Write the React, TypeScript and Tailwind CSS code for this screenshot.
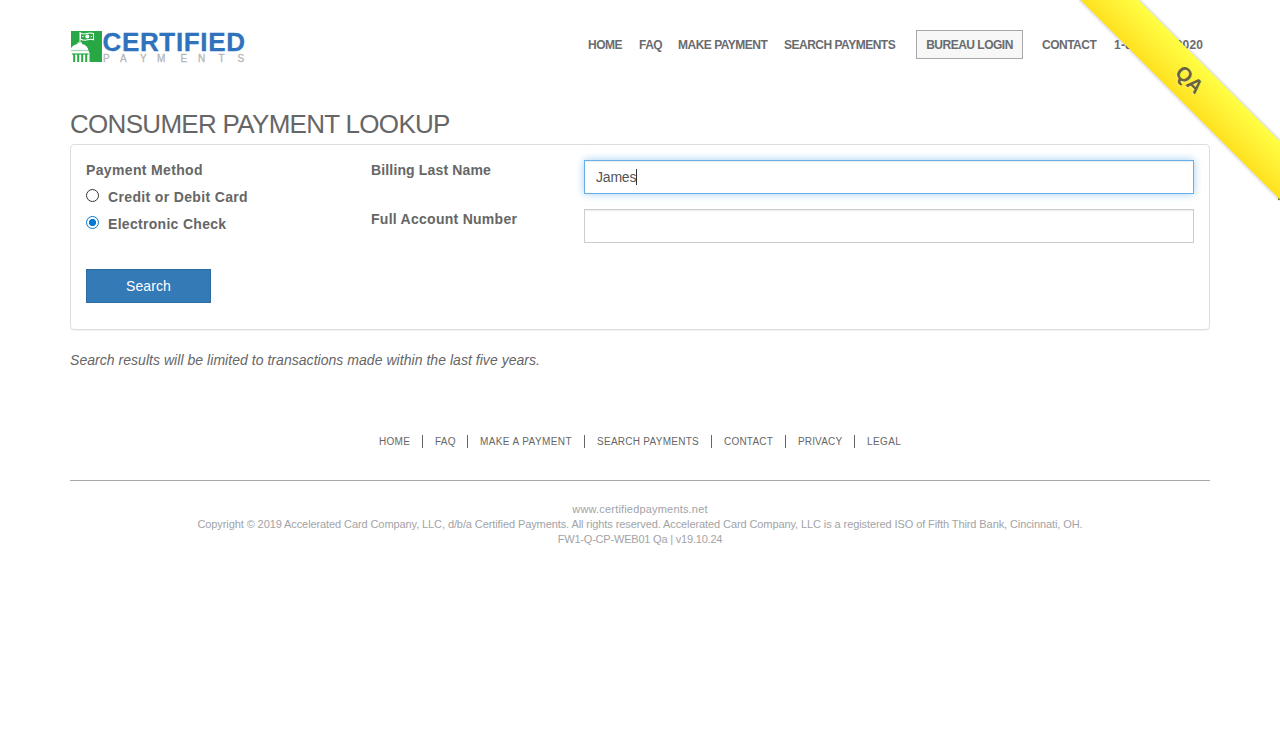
import React, { useState } from 'react';

function Logo() {
  return (
    <svg className="block overflow-visible" width="176" height="34" viewBox="0 0 176 34">
      <rect x="1" y="2" width="31" height="31" fill="#27a844" />
      <path d="M1 19 Q3.500 15.500 7.500 15 V13.500 H12 V15 Q17.500 16 18.500 21.500 L19.500 24 V33 H1 Z" fill="#fff" />
      <path d="M1 21.700 H18.500" stroke="#27a844" strokeWidth="0.500" />
      <path d="M2 25 H18.500" stroke="#27a844" strokeWidth="1.200" />
      <path d="M4.200 25 V33 M8.200 25 V33 M12.200 25 V33 M16.200 25 V33" stroke="#27a844" strokeWidth="2" />
      <path d="M10 3 V14" stroke="#fff" strokeWidth="1" />
      <path d="M10.500 4.200 Q13.500 5.500 17 4.500 T23.500 4.500 V10.700 Q20.500 9.700 17.500 10.800 T10.500 10.200 Z" fill="none" stroke="#fff" strokeWidth="1.100" />
      <circle cx="17.300" cy="7.600" r="2" fill="#fff" />
      <path d="M12.300 7.500 H13.600 M20.800 7.500 H22" stroke="#fff" strokeWidth="1.200" />
      <text x="32.500" y="21.500" textLength="142.500" lengthAdjust="spacing" fontSize="26" fontWeight="700" fill="#3073bd" stroke="#3073bd" strokeWidth="0.300">CERTIFIED</text>
      <text y="33" x="33 50 70 87 110.500 128 148.500 167.500" fontSize="10" fill="#b5b6b8" stroke="#b5b6b8" strokeWidth="0.300">PAYMENTS</text>
    </svg>
  );
}

function Ribbon() {
  return (
    <div className="pointer-events-none absolute top-0 right-0 h-[201px] w-[201px] overflow-hidden">
      <div className="absolute right-0 top-[196px] h-1 w-0.5 bg-[#7f9020]" />
      <div className="absolute left-[-54px] top-[60px] flex h-[41px] w-[330px] rotate-45 items-center justify-center bg-linear-to-t from-[#ffe11e] to-[#ffff44] pr-0.5 text-[20px] font-bold text-[#6a6340] shadow-[0_0_4px_rgba(0,0,0,0.3)] [text-shadow:0_1px_0_rgba(255,255,255,0.5)]">
        QA
      </div>
    </div>
  );
}

const footerLinks = [
  { label: 'HOME', style: 'w-[43px] tracking-[0.3px]' },
  { label: 'FAQ', style: 'w-[45px] border-l pl-3 tracking-[0.2px]' },
  { label: 'MAKE A PAYMENT', style: 'w-[117px] border-l pl-3 tracking-[0.4px]' },
  { label: 'SEARCH PAYMENTS', style: 'w-[127px] border-l pl-3 tracking-[0.27px]' },
  { label: 'CONTACT', style: 'w-[74px] border-l pl-3 tracking-[0.2px]' },
  { label: 'PRIVACY', style: 'w-[69px] border-l pl-3 tracking-[0.15px]' },
  { label: 'LEGAL', style: 'w-[47px] border-l pl-3 tracking-[0.4px]' },
];

export default function App() {
  const [method, setMethod] = useState('check');
  const radio =
    'mr-[9px] mt-[-3px] h-[13px] w-[13px] shrink-0 appearance-none rounded-full border border-[#333] checked:border-[#0078d7] checked:bg-[radial-gradient(circle,#0078d7_3.2px,transparent_4px)]';
  return (
    <div className="relative min-h-[750px] overflow-hidden bg-white font-['Liberation_Sans',Arial,sans-serif] text-sm text-[#666]">
      <div className="mx-auto w-[1140px]">
        <header className="flex h-[90px] items-start justify-between pt-[29px]">
          <Logo />
          <nav className="mt-px flex h-[29px] items-center pr-[7px] text-xs font-bold tracking-[-0.5px] whitespace-nowrap text-[#6a6b6e]">
            <a className="w-[51px]">HOME</a>
            <a className="w-[39px]">FAQ</a>
            <a className="w-[106px]">MAKE PAYMENT</a>
            <a className="w-[132px]">SEARCH PAYMENTS</a>
            <a className="mr-[19px] flex h-[29px] w-[107px] items-center justify-center border border-[#a7a8ac] bg-[#f7f7f7]">BUREAU LOGIN</a>
            <a className="w-[72px]">CONTACT</a>
            <a className="w-[89px] tracking-[0.28px]">1-888-604-2020</a>
          </nav>
        </header>

        <h1 className="pt-[19px] text-[26px] leading-[30px] tracking-[-0.7px]">CONSUMER PAYMENT LOOKUP</h1>

        <section className="mt-[5px] flex h-[186px] rounded-[4px] border border-[#ddd] px-[15px] pt-[15px] font-bold tracking-[0.35px] shadow-[0_1px_1px_rgba(0,0,0,0.05)]">
          <div className="w-[285px] leading-5">
            <div>Payment Method</div>
            <label className="mt-[7px] flex items-center">
              <input type="radio" name="m" className={radio} checked={method === 'card'} onChange={() => setMethod('card')} />
              Credit or Debit Card
            </label>
            <label className="mt-[7px] flex items-center tracking-[0.3px]">
              <input type="radio" name="m" className={radio} checked={method === 'check'} onChange={() => setMethod('check')} />
              Electronic Check
            </label>
            <button className="mt-[35px] block h-[34px] w-[125px] border border-[#2e6da4] bg-[#337ab7] text-sm font-normal tracking-[0.1px] text-white">Search</button>
          </div>
          <div className="flex-1">
            <div className="flex h-[49px]">
              <div className="w-[213px] leading-5 tracking-[0.15px]">Billing Last Name</div>
              <div className="flex h-[34px] flex-1 items-center border border-[#66afe9] pl-[11px] font-normal tracking-[-0.2px] text-[#555] shadow-[inset_0_1px_1px_rgba(0,0,0,0.075),0_0_8px_rgba(102,175,233,0.6)]">
                James
                <span className="h-4 w-px bg-[#333]" />
              </div>
            </div>
            <div className="flex">
              <div className="w-[213px] leading-5 tracking-[0.27px]">Full Account Number</div>
              <div className="h-[34px] flex-1 border border-[#ccc] shadow-[inset_0_1px_1px_rgba(0,0,0,0.075)]" />
            </div>
          </div>
        </section>

        <p className="mt-5 leading-5 tracking-[0.04px] italic">Search results will be limited to transactions made within the last five years.</p>

        <footer>
          <nav className="mt-[65px] flex justify-center text-[10px] leading-[13px] whitespace-nowrap">
            {footerLinks.map(({ label, style }) => (
              <a key={label} className={`border-[#666] ${style}`}>{label}</a>
            ))}
          </nav>
          <div className="mt-[32px] h-px bg-[#a7a8ac]" />
          <div className="mt-[21px] text-center text-[11px] leading-[15px] text-[#a2a3a6]">
            <div className="tracking-[0.18px]">www.certifiedpayments.net</div>
            <div className="tracking-[-0.093px]">Copyright © 2019 Accelerated Card Company, LLC, d/b/a Certified Payments. All rights reserved. Accelerated Card Company, LLC is a registered ISO of Fifth Third Bank, Cincinnati, OH.</div>
            <div className="tracking-[-0.2px]">FW1-Q-CP-WEB01 Qa | v19.10.24</div>
          </div>
        </footer>
      </div>
      <Ribbon />
    </div>
  );
}
